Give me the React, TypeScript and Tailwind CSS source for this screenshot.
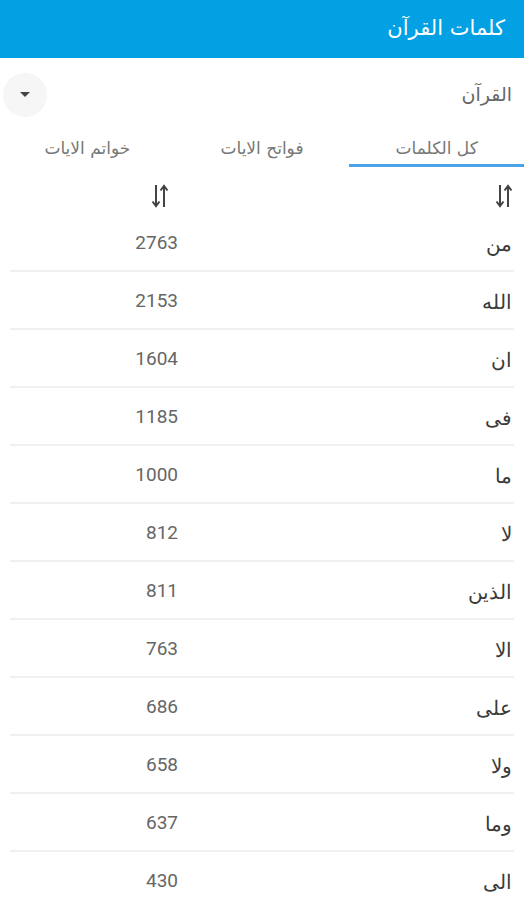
import React from 'react';

const rows: [string, number][] = [
  ['من', 2763],
  ['الله', 2153],
  ['ان', 1604],
  ['فى', 1185],
  ['ما', 1000],
  ['لا', 812],
  ['الذين', 811],
  ['الا', 763],
  ['على', 686],
  ['ولا', 658],
  ['وما', 637],
  ['الى', 430],
];

const tabs = ['كل الكلمات', 'فواتح الايات', 'خواتم الايات'];

const SortIcon = () => (
  <svg width="18" height="26" viewBox="0 0 18 26" fill="none" stroke="#444" strokeWidth="2">
    {/* down arrow on the left, up arrow on the right */}
    <path d="M5 2v20" />
    <path d="M1.5 18.5L5 23l3.5-4.5" />
    <path d="M13 24V4" />
    <path d="M9.5 7.5L13 3l3.5 4.5" />
  </svg>
);

export default function App() {
  return (
    <div dir="rtl" className="w-[524px] h-[900px] overflow-hidden bg-white" style={{ fontFamily: '"DejaVu Sans", "Noto Sans", sans-serif' }}>
      {/* App bar */}
      <div className="h-[58px] bg-[#03a0e4] flex items-center pr-[19px]">
        <h1 className="text-white text-[21px]">كلمات القرآن</h1>
      </div>

      {/* Source selector */}
      <div className="h-[71px] flex items-center justify-between pr-[12px] pl-[3px] pt-[2px]">
        <span className="text-[#666] text-[19px]">القرآن</span>
        <button className="w-[44px] h-[44px] rounded-full bg-[#f6f6f6] flex items-center justify-center">
          <svg width="10" height="6" viewBox="0 0 10 6"><path d="M0 0h10L5 5z" fill="#444" /></svg>
        </button>
      </div>

      {/* Tabs */}
      <div className="flex h-[38px] pt-[5px]">
        {tabs.map((t, i) => (
          <div
            key={t}
            className={`w-[175px] flex items-center justify-center text-[17px] text-[#777] border-b-[3px] ${i === 0 ? 'border-[#4aa3e6]' : 'border-transparent'}`}
          >
            {t}
          </div>
        ))}
      </div>

      {/* Table */}
      <div className="px-[10px]">
        <div className="h-[47px] flex items-center justify-between pt-[10px]">
          <div className="mr-[1px]"><SortIcon /></div>
          <div className="w-[168px] flex justify-start"><div className="mr-[9px]"><SortIcon /></div></div>
        </div>
        {rows.map(([w, n]) => (
          <div key={w} className="h-[58px] flex items-center justify-between border-b-2 border-[#f0f0f0] pt-[3px]">
            <span className="text-[20px] text-[#3a3a3a] pr-[2px]" style={{ fontFamily: '"DejaVu Serif", "Liberation Serif", serif' }}>{w}</span>
            <span className="w-[168px] text-[19px] text-[#666]" dir="ltr" style={{ fontFamily: 'Roboto, sans-serif', textAlign: 'right' }}>{n}</span>
          </div>
        ))}
      </div>
    </div>
  );
}
